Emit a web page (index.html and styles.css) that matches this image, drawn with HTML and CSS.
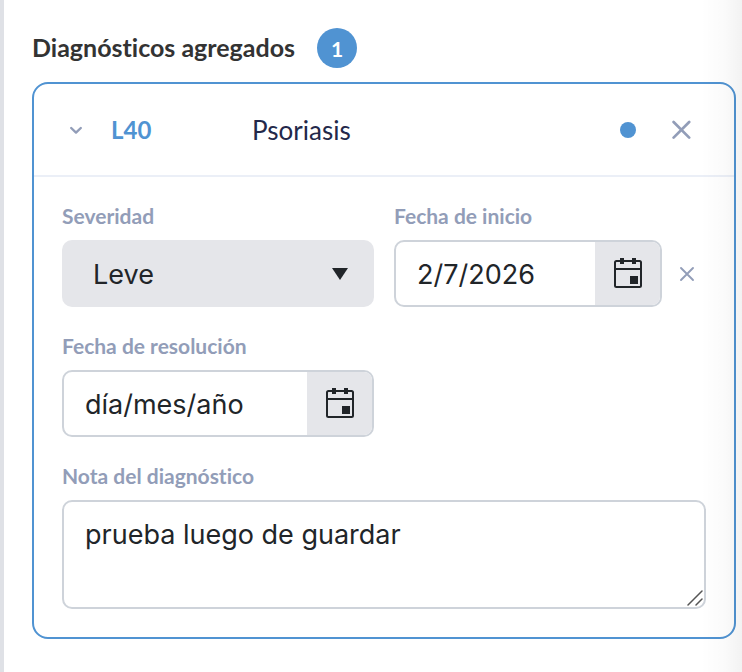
FILE: index.html
```html
<!DOCTYPE html>
<html lang="es">
<head>
  <meta charset="UTF-8">
  <meta name="viewport" content="width=device-width, initial-scale=1.0">
  <title>Diagnósticos agregados</title>
  <link rel="stylesheet" href="styles.css">
</head>
<body>
  <main class="panel">
    <div class="panel-header">
      <h2>Diagnósticos agregados</h2>
      <span class="count">1</span>
    </div>

    <section class="card">
      <div class="card-header">
        <button type="button" class="icon-btn toggle" aria-label="Contraer">
          <svg width="14" height="10" viewBox="0 0 14 10" fill="none" stroke="currentColor" stroke-width="2.400" stroke-linecap="round" stroke-linejoin="round"><path d="M2.200 3l4.800 4.600L11.800 3"/></svg>
        </button>
        <span class="code">L40</span>
        <span class="name">Psoriasis</span>
        <span class="dot"></span>
        <button type="button" class="icon-btn remove" aria-label="Eliminar diagnóstico">
          <svg width="20" height="20" viewBox="0 0 20 20" fill="none" stroke="currentColor" stroke-width="2.700" stroke-linecap="round"><path d="M2.600 2l15.600 15.600M18.200 2L2.600 17.600"/></svg>
        </button>
      </div>

      <form class="card-body">
        <div class="form-group">
          <label for="severidad">Severidad</label>
          <div class="select-wrap">
            <select id="severidad" name="severidad">
              <option value="leve" selected>Leve</option>
              <option value="moderada">Moderada</option>
              <option value="grave">Grave</option>
            </select>
            <svg class="arrow" width="16" height="12" viewBox="0 0 16 12"><path d="M0 0h16L8 12z" fill="#212529"/></svg>
          </div>
        </div>

        <div class="form-group">
          <label for="inicio">Fecha de inicio</label>
          <div class="date-row">
            <div class="date-box">
              <input type="text" id="inicio" name="inicio" value="2/7/2026">
              <button type="button" aria-label="Abrir calendario">
                <svg width="28" height="30" viewBox="0 0 28 30"><rect x="1" y="3" width="26" height="26" rx="1.500" fill="none" stroke="#212529" stroke-width="2"/><path d="M1 11h26" stroke="#212529" stroke-width="2"/><path d="M6 0h4v6H6zM18 0h4v6h-4zM16 18h8v8h-8z" fill="#212529"/></svg>
              </button>
            </div>
            <button type="button" class="icon-btn clear" aria-label="Borrar fecha">
              <svg width="16" height="16" viewBox="0 0 16 16" fill="none" stroke="currentColor" stroke-width="1.900" stroke-linecap="round"><path d="M2 2l12 12M14 2L2 14"/></svg>
            </button>
          </div>
        </div>

        <div class="form-group first-col">
          <label for="resolucion">Fecha de resolución</label>
          <div class="date-box">
            <input type="text" id="resolucion" name="resolucion" placeholder="día/mes/año">
            <button type="button" aria-label="Abrir calendario">
              <svg width="28" height="30" viewBox="0 0 28 30"><rect x="1" y="3" width="26" height="26" rx="1.500" fill="none" stroke="#212529" stroke-width="2"/><path d="M1 11h26" stroke="#212529" stroke-width="2"/><path d="M6 0h4v6H6zM18 0h4v6h-4zM16 18h8v8h-8z" fill="#212529"/></svg>
            </button>
          </div>
        </div>

        <div class="form-group full">
          <label for="nota">Nota del diagnóstico</label>
          <div class="note-wrap">
            <textarea id="nota" name="nota">prueba luego de guardar</textarea>
            <svg class="grip" width="16" height="16" viewBox="0 0 16 16" fill="none" stroke="#555" stroke-width="1.500" stroke-linecap="round"><path d="M1 15L15 1M9 15l6-6"/></svg>
          </div>
        </div>
      </form>
    </section>
  </main>
</body>
</html>
```
FILE: styles.css
```css
* {
  box-sizing: border-box;
}

body {
  margin: 0;
  background-color: #fff;
  font-family: Lato, sans-serif;
  font-variant-ligatures: none;
  color: #212529;
}

.panel {
  position: relative;
  min-height: 100vh;
  padding: 28px 6px 32px 28px;
  border-left: 4px solid #dfe1e6;
}

/* soft shade along the right edge */
.panel::after {
  content: "";
  position: absolute;
  top: 0;
  right: 0;
  bottom: 0;
  width: 42px;
  background: linear-gradient(to right, rgba(0, 0, 0, 0), rgba(0, 0, 0, 0.02) 60%, rgba(0, 0, 0, 0.05));
  pointer-events: none;
}

.panel-header {
  display: flex;
  align-items: center;
  gap: 22px;
  margin-bottom: 14px;
}

h2 {
  margin: 0;
  font-size: 25px;
  font-weight: bold;
  line-height: 38px;
  padding-bottom: 2px;
  color: #333;
}

.count {
  width: 40px;
  height: 40px;
  border-radius: 50%;
  background-color: #5093d2;
  color: #fff;
  font-size: 21px;
  font-weight: bold;
  line-height: 42px;
  text-align: center;
}

.card {
  border: 2px solid #5093d2;
  border-radius: 16px;
}

.card-header {
  display: flex;
  align-items: center;
  height: 93px;
  padding: 0 28px;
  border-bottom: 2px solid #ebeff7;
}

.icon-btn {
  display: flex;
  align-items: center;
  justify-content: center;
  padding: 0;
  border: none;
  background: none;
  color: #929db8;
  cursor: pointer;
}

.toggle {
  width: 28px;
  height: 28px;
  margin-right: 21px;
}

.code {
  width: 141px;
  color: #5093d2;
  font-size: 24px;
  font-weight: bold;
}

.name {
  flex: 1;
  color: #23284a;
  font-size: 26px;
}

.dot {
  width: 16px;
  height: 16px;
  border-radius: 50%;
  background-color: #5093d2;
}

.remove {
  width: 50px;
  height: 50px;
  margin-left: 20px;
}

.card-body {
  display: grid;
  grid-template-columns: 1fr 1fr;
  gap: 28px 20px;
  padding: 28px;
}

.form-group {
  min-width: 0;
}

.first-col {
  grid-column: 1;
}

.full {
  grid-column: 1 / -1;
}

label {
  display: block;
  margin-bottom: 13px;
  font-size: 21px;
  font-weight: bold;
  line-height: 22px;
  color: #929db8;
}

input, select, textarea {
  font-family: Inter, sans-serif;
  font-size: 27px;
  color: #212529;
}

.select-wrap, .note-wrap {
  position: relative;
}

select {
  display: block;
  width: 100%;
  height: 67px;
  padding: 2px 60px 0 31px;
  border: none;
  border-radius: 10px;
  background-color: #e5e6ea;
  appearance: none;
}

.arrow {
  position: absolute;
  top: 28px;
  right: 26px;
  pointer-events: none;
}

.date-row {
  display: flex;
  align-items: center;
  gap: 6px;
}

.date-box {
  display: flex;
  flex: 1;
  min-width: 0;
  height: 67px;
  border: 2px solid #ced3da;
  border-radius: 10px;
  overflow: hidden;
}

.date-box input {
  flex: 1;
  min-width: 0;
  padding: 2px 0 0 21px;
  border: none;
  background: none;
}

.date-box input::placeholder {
  color: #212529;
}

.date-box button {
  display: flex;
  align-items: center;
  justify-content: center;
  width: 65px;
  padding: 0 0 2px;
  border: none;
  background-color: #e5e6ea;
  cursor: pointer;
}

.clear {
  width: 38px;
  height: 38px;
}

textarea {
  display: block;
  width: 100%;
  height: 109px;
  padding: 13px 21px;
  border: 2px solid #ced3da;
  border-radius: 10px;
  background: none;
  line-height: 40px;
  resize: none;
}

.grip {
  position: absolute;
  right: 3px;
  bottom: 3px;
  pointer-events: none;
}
```
